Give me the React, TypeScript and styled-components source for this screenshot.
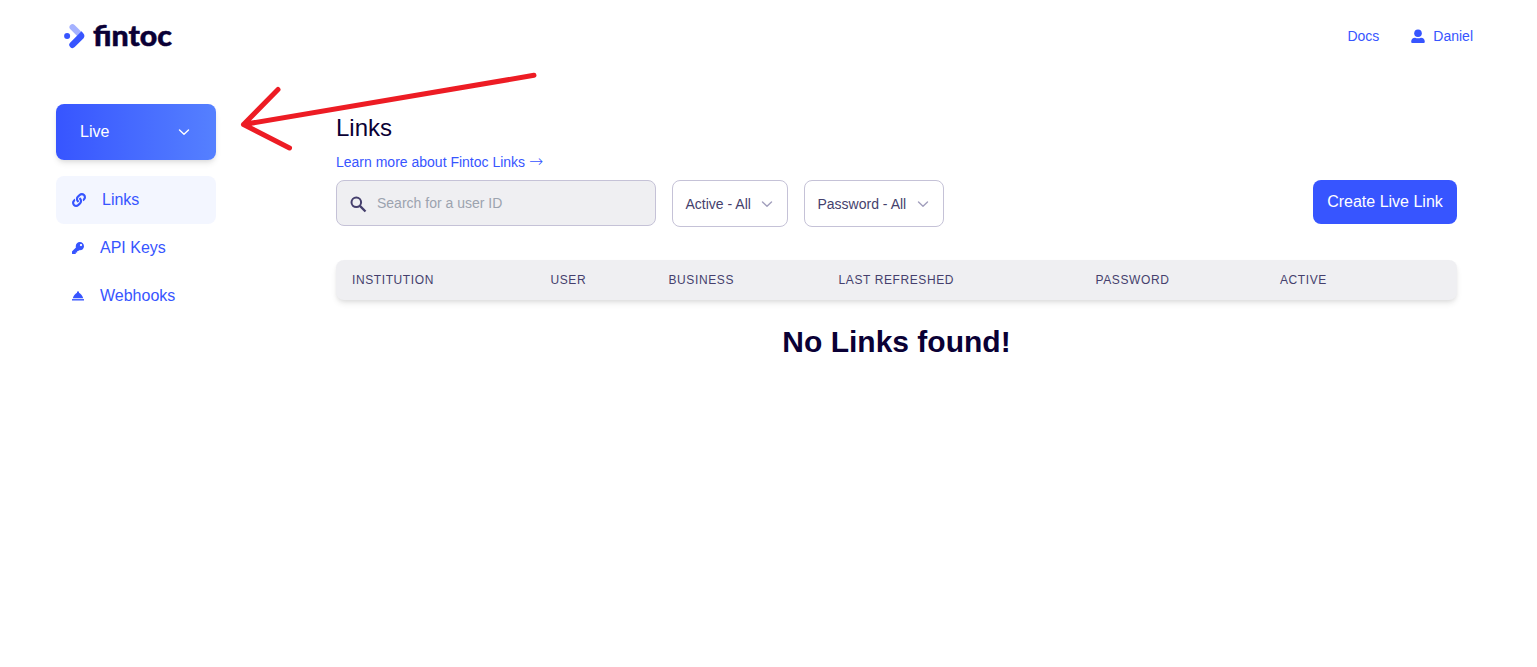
import React from 'react';

import styled, { createGlobalStyle } from 'styled-components';
import { FaKey, FaLink } from 'react-icons/fa';

const mainColor = '#3755ff';
const darkColor = '#0a0035';
const mutedDarkColor = '#453f6d';
const borderColor = '#c5c2d7';
const greyColor = '#efeff2';
const radius = '8px';
const shadow = '0 4px 6px -1px rgba(0, 0, 0, 0.1), 0 2px 4px -1px rgba(0, 0, 0, 0.06)';

const columns = [
  { label: 'Institution', width: 198.5 },
  { label: 'User', width: 118 },
  { label: 'Business', width: 170 },
  { label: 'Last refreshed', width: 257 },
  { label: 'Password', width: 184.5 },
  { label: 'Active', width: 177 },
];

const Chevron = (): JSX.Element => (
  <svg width='12' height='8' viewBox='0 0 12 8' fill='none'>
    <path
      d='M1.5 2 6 6.300l4.500-4.300'
      stroke='currentColor'
      strokeWidth='1.4'
      strokeLinecap='round'
      strokeLinejoin='round'
    />
  </svg>
);

const LogoMark = (): JSX.Element => (
  <svg width='22' height='26' viewBox='0 0 22 26' fill='none'>
    <circle cx='3.1' cy='13' r='3' fill={mainColor} />
    <path d='M8.500 4.200 16 11.700' stroke='#a5b2ff' strokeWidth='6' strokeLinecap='round' />
    <path
      d='M6.300 19.400 17.500 8.300 19.600 10.800Q21.200 13 19.600 15.200L10.700 24.100A3.200 3.200 0 0 1 6.300 19.400z'
      fill={mainColor}
    />
  </svg>
);

const UserIcon = (): JSX.Element => (
  <svg width='14' height='14' viewBox='0 0 14 14' fill='currentColor'>
    <circle cx='7' cy='4.200' r='3.800' />
    <path d='M0.2 12.700C0.200 10 1.800 8.700 4 8.700Q7 10 10 8.700c2.200 0 3.800 1.300 3.800 4 0 .8-.5 1.300-1.400 1.300H1.600C.7 14 .2 13.500.2 12.700z' />
  </svg>
);

const SearchIcon = (): JSX.Element => (
  <svg width='18' height='18' viewBox='0 0 18 18' fill='none' stroke='currentColor'>
    <circle cx='7.300' cy='7.300' r='4.800' strokeWidth='2' />
    <path d='M10.900 10.900 16.500 16.500' strokeWidth='2.300' />
  </svg>
);

const BellIcon = (): JSX.Element => (
  <svg width='12' height='10' viewBox='0 0 12 10' fill='currentColor'>
    <path d='M.8 7.300C1.500 4.800 3 3 5 1.700V.5h2v1.200C9 3 10.500 4.800 11.200 7.300z' />
    <path d='M0 8.100h12v1.400H0z' />
  </svg>
);

const App = (): JSX.Element => {
  return (
    <>
      <GlobalStyle />
      <Header>
        <Logo>
          <LogoMark />
          <LogoText>fintoc</LogoText>
        </Logo>
        <HeaderNav>
          <HeaderLink>Docs</HeaderLink>
          <HeaderLink>
            <UserIcon />
            Daniel
          </HeaderLink>
        </HeaderNav>
      </Header>
      <Body>
        <Sidebar>
          <ModeButton>
            Live
            <Chevron />
          </ModeButton>
          <SidebarLink $active>
            <FaLink size={14} />
            Links
          </SidebarLink>
          <SidebarLink>
            <FaKey size={12} />
            API Keys
          </SidebarLink>
          <SidebarLink>
            <BellIcon />
            Webhooks
          </SidebarLink>
        </Sidebar>
        <Main>
          <Title>Links</Title>
          <LearnMore>
            Learn more about Fintoc Links <TextArrow>→</TextArrow>
          </LearnMore>
          <Toolbar>
            <SearchField>
              <SearchIcon />
              <SearchInput placeholder='Search for a user ID' />
            </SearchField>
            <Filter $width={116}>
              Active - All
              <Chevron />
            </Filter>
            <Filter $width={140}>
              Password - All
              <Chevron />
            </Filter>
            <CreateButton>Create Live Link</CreateButton>
          </Toolbar>
          <TableHeader>
            {columns.map(({ label, width }) => (
              <Column key={label} $width={width}>
                {label}
              </Column>
            ))}
          </TableHeader>
          <EmptyMessage>No Links found!</EmptyMessage>
        </Main>
      </Body>
      <Arrow width='300' height='84' viewBox='0 0 300 84'>
        <path d='M294 7.300 3.500 56.500M38 21.500l-34.500 35 46 23.500' />
      </Arrow>
    </>
  );
};

const GlobalStyle = createGlobalStyle`
  * {
    box-sizing: border-box;
  }

  body {
    margin: 0;
    background-color: white;
    color: ${darkColor};
    font-family: 'Liberation Sans', Arial, sans-serif;
    font-size: 16px;
    line-height: 24px;
  }

  svg {
    display: block;
    flex-shrink: 0;
  }

  button, input {
    font: inherit;
  }
`;

const Header = styled.header`
  display: flex;
  align-items: center;
  justify-content: space-between;
  height: 72px;
  padding: 0 64px;
`;

const Logo = styled.div`
  display: flex;
  align-items: center;
`;

const LogoText = styled.span`
  margin-left: 7px;
  font-family: Lato, sans-serif;
  font-size: 28px;
  font-weight: 900;
  line-height: 32px;
  transform: translateY(-1px) scaleX(1.08);
  transform-origin: left;
  -webkit-text-stroke: 0.5px ${darkColor};
`;

const HeaderNav = styled.nav`
  display: flex;
  gap: 32px;
`;

const HeaderLink = styled.a`
  display: flex;
  align-items: center;
  gap: 8px;
  color: ${mainColor};
  font-size: 14px;
  line-height: 20px;
`;

const Body = styled.div`
  display: flex;
  gap: 120px;
  padding: 32px 80px 0 56px;
`;

const Sidebar = styled.aside`
  width: 160px;
  flex-shrink: 0;
`;

const ModeButton = styled.button`
  display: flex;
  align-items: center;
  justify-content: space-between;
  width: 100%;
  height: 56px;
  margin-bottom: 16px;
  padding: 0 26px 0 24px;
  border: none;
  border-radius: ${radius};
  background: linear-gradient(to right, ${mainColor}, #5580ff);
  box-shadow: ${shadow};
  color: white;
`;

const SidebarLink = styled.a<{ $active?: boolean }>`
  display: flex;
  align-items: center;
  gap: 16px;
  height: 48px;
  padding: 0 16px;
  border-radius: ${radius};
  background-color: ${({ $active }) => ($active ? '#f3f6ff' : 'transparent')};
  color: ${mainColor};
`;

const Main = styled.main`
  flex: 1;
`;

const Title = styled.h1`
  margin: 8px 0 0;
  font-size: 24px;
  font-weight: normal;
  line-height: 32px;
`;

const LearnMore = styled.a`
  display: block;
  height: 20px;
  margin: 8px 0;
  color: ${mainColor};
  font-size: 14px;
  line-height: 20px;
`;

const TextArrow = styled.span`
  font-family: 'DejaVu Sans', sans-serif;
  font-size: 17px;
  font-weight: 200;
  line-height: 0;
`;

const Toolbar = styled.div`
  display: flex;
  align-items: flex-start;
  gap: 16px;
  height: 80px;
`;

const SearchField = styled.label`
  display: flex;
  align-items: center;
  gap: 10px;
  width: 320px;
  height: 46px;
  padding: 0 12px;
  border: 1px solid ${borderColor};
  border-radius: ${radius};
  background-color: ${greyColor};
  color: ${mutedDarkColor};

  svg {
    margin-top: 2px;
  }
`;

const SearchInput = styled.input`
  flex: 1;
  padding: 0;
  border: none;
  outline: none;
  background: transparent;
  font-size: 14px;

  &::placeholder {
    color: #9ca3af;
  }
`;

const Filter = styled.button<{ $width: number }>`
  display: flex;
  align-items: center;
  justify-content: space-between;
  width: ${({ $width }) => $width}px;
  height: 47px;
  padding: 0 14px 0 12.5px;
  border: 1px solid ${borderColor};
  border-radius: ${radius};
  background-color: white;
  color: ${mutedDarkColor};
  font-size: 14px;

  svg {
    color: #a29fbd;
  }
`;

const CreateButton = styled.button`
  width: 144px;
  height: 44px;
  margin-left: auto;
  padding: 0;
  border: none;
  border-radius: ${radius};
  background-color: ${mainColor};
  color: white;
`;

const TableHeader = styled.div`
  display: flex;
  align-items: center;
  height: 40px;
  padding: 0 0 0 16px;
  border-radius: ${radius};
  background-color: ${greyColor};
  box-shadow: ${shadow};
`;

const Column = styled.span<{ $width: number }>`
  width: ${({ $width }) => $width}px;
  color: ${mutedDarkColor};
  font-size: 12px;
  letter-spacing: 0.05em;
  line-height: 16px;
  text-transform: uppercase;
`;

const EmptyMessage = styled.h2`
  margin: 24px 0 0;
  font-size: 30px;
  line-height: 36px;
  text-align: center;
`;

/* Hand-drawn pointer laid over the page, towards the mode button */
const Arrow = styled.svg`
  position: absolute;
  top: 68px;
  left: 240px;
  fill: none;
  stroke: #ed1c24;
  stroke-width: 5;
  stroke-linecap: round;
  stroke-linejoin: round;
  pointer-events: none;
`;

export default App;
